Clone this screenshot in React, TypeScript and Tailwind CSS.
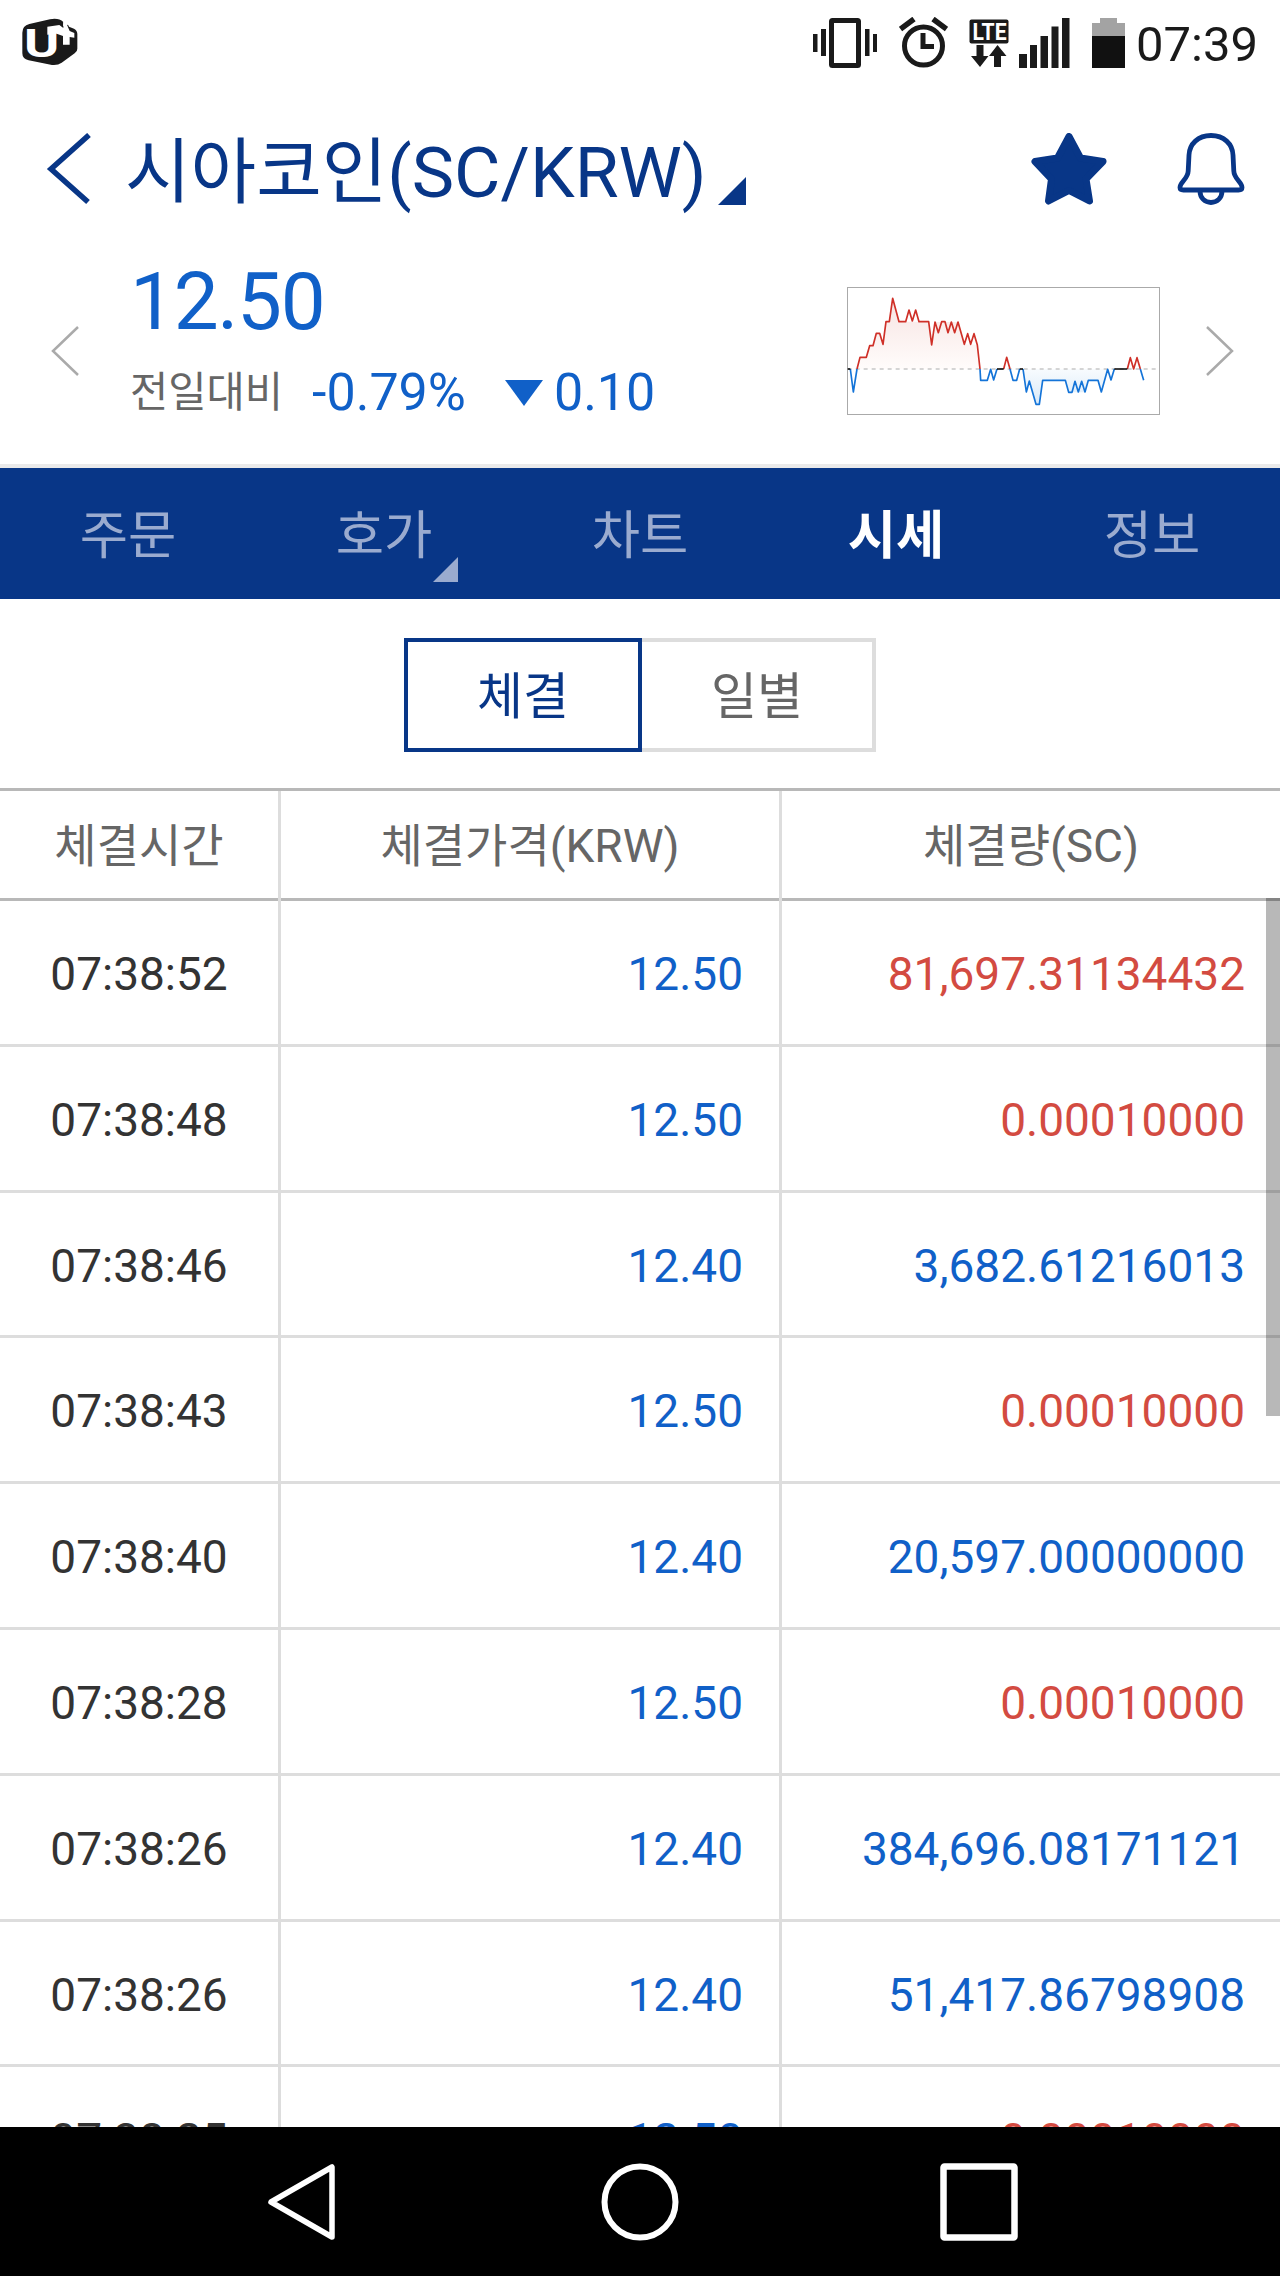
import clsx from "clsx";

type Side = "up" | "down";

interface Trade {
  time: string;
  price: string;
  amount: string;
  side: Side;
}

const trades: Trade[] = [
  { time: "07:38:52", price: "12.50", amount: "81,697.31134432", side: "up" },
  { time: "07:38:48", price: "12.50", amount: "0.00010000", side: "up" },
  { time: "07:38:46", price: "12.40", amount: "3,682.61216013", side: "down" },
  { time: "07:38:43", price: "12.50", amount: "0.00010000", side: "up" },
  { time: "07:38:40", price: "12.40", amount: "20,597.00000000", side: "down" },
  { time: "07:38:28", price: "12.50", amount: "0.00010000", side: "up" },
  { time: "07:38:26", price: "12.40", amount: "384,696.08171121", side: "down" },
  { time: "07:38:26", price: "12.40", amount: "51,417.86798908", side: "down" },
  { time: "07:38:25", price: "12.50", amount: "0.00010000", side: "up" },
];

const tabs = [
  { label: "주문" },
  { label: "호가", hasMenu: true },
  { label: "차트" },
  { label: "시세", active: true },
  { label: "정보" },
];

function CarrierLogo() {
  return (
    <svg viewBox="66 54 168 144" className="h-12 w-14">
      <path
        d="M67 98Q67 77 88 72L150 58Q176 53 190 66L189 78L204 74L207 80L222 86Q232 92 232 102V146Q232 155 224 160L185 188Q173 197 156 195L86 181Q67 177 67 160Z"
        fill="#1a1a1a"
      />
      <text
        x="72"
        y="172"
        textLength="106"
        lengthAdjust="spacingAndGlyphs"
        className="font-['Roboto',sans-serif] text-[116px] font-bold"
        fill="#fff"
      >
        U
      </text>
      <path
        d="M142 80L178 75L190 84V64L199 70L209 93L223 99V113L209 111V134H189V108L170 101L142 104Z"
        fill="#fff"
      />
    </svg>
  );
}

function VibrateIcon() {
  return (
    <svg viewBox="0 0 64 51" className="h-[51px] w-16" fill="#1a1a1a">
      <rect x="0" y="17" width="4.5" height="18" />
      <rect x="8" y="12" width="5" height="27" />
      <rect x="18.500" y="3.500" width="27" height="45" rx="1" fill="none" stroke="#1a1a1a" strokeWidth="5" />
      <rect x="52" y="12" width="4.500" height="27" />
      <rect x="60" y="17" width="4" height="18" />
    </svg>
  );
}

function AlarmIcon() {
  return (
    <svg viewBox="0 0 49 51" className="h-[51px] w-[49px]" fill="none" stroke="#1a1a1a">
      <circle cx="24.500" cy="29" r="19" strokeWidth="5" />
      <path d="M24 16V29.500H35" strokeWidth="5" />
      <path d="M1.500 12L15 2M34 2L47.500 12" strokeWidth="5.500" />
    </svg>
  );
}

function LteIcon() {
  return (
    <svg viewBox="0 0 40 49" className="h-[49px] w-10 overflow-visible" fill="#1a1a1a">
      <rect x="0.500" y="0.500" width="39" height="24" rx="2" />
      <text
        x="3.500"
        y="20.500"
        textLength="34"
        lengthAdjust="spacingAndGlyphs"
        className="font-['Roboto',sans-serif] text-[23px] font-bold"
        fill="#fff"
      >
        LTE
      </text>
      <path d="M7.500 26h7v11h5L11 48L2 37h5.500zM25 48h7V37h5.500L28.500 26L20 37h5z" />
    </svg>
  );
}

function SignalIcon() {
  return (
    <svg viewBox="0 0 51 50" className="h-[50px] w-[51px]" fill="#1a1a1a">
      <rect x="0" y="36" width="8" height="14" />
      <rect x="11" y="27" width="7" height="23" />
      <rect x="21.500" y="18" width="7.500" height="32" />
      <rect x="32.500" y="8.500" width="7" height="41.500" />
      <rect x="43" y="0" width="7.500" height="50" />
    </svg>
  );
}

function BatteryIcon() {
  return (
    <svg viewBox="0 0 33 51" className="h-[51px] w-[33px]">
      <path d="M8 1h17v5h8v13H0V6h8z" fill="#a3a3a3" />
      <rect y="19" width="33" height="32" fill="#111" />
    </svg>
  );
}

function StatusBar() {
  return (
    <div className="flex h-20 items-start justify-between pr-[22px] pl-[22px]">
      <div className="pt-[18px]">
        <CarrierLogo />
      </div>
      <div className="flex items-start pt-[17px]">
        <VibrateIcon />
        <div className="ml-[22px]">
          <AlarmIcon />
        </div>
        <div className="mt-0.5 ml-[21px]">
          <LteIcon />
        </div>
        <div className="mt-px ml-[10px]">
          <SignalIcon />
        </div>
        <div className="ml-[22px]">
          <BatteryIcon />
        </div>
        <span className="ml-[11px] text-[49px] leading-[56px] text-[#1a1a1a]">07:39</span>
      </div>
    </div>
  );
}

function Header() {
  return (
    <header className="flex h-[178px] items-center pr-[35px] pl-[46px]">
      <svg viewBox="0 0 46 72" className="h-[72px] w-[46px]">
        <path d="M43 2L5 36L42 69" fill="none" stroke="#083687" strokeWidth="5.500" />
      </svg>
      <h1 className="ml-[33px] pt-[7px] text-[71.3px] leading-[90px] whitespace-nowrap text-[#083687]">
        시아코인(SC/KRW)
      </h1>
      <svg viewBox="0 0 28 28" className="mt-11 ml-[11px] size-7">
        <path d="M28 0V28H0z" fill="#083687" />
      </svg>
      <div className="ml-auto flex items-center gap-[70px]">
        <svg viewBox="0 0 76 72" className="h-[72px] w-[76px]">
          <path
            d="M38 3.500L49.500 25L72 28.500L55 46L58.500 68L38 57.500L17.500 68L20.500 46L4 28.500L26.500 25Z"
            fill="#083687"
            stroke="#083687"
            strokeWidth="7"
            strokeLinejoin="round"
          />
        </svg>
        <svg viewBox="0 0 68 72" className="h-[72px] w-[68px]" fill="none" stroke="#083687" strokeWidth="4.800">
          <path d="M34 2.500C21 2.500 12.500 11 12 22L11.200 38C11 46 3 49 3 54.500Q3 57 6.500 57H61.500Q65 57 65 54.500C65 49 57 46 56.800 38L56 22C55.500 11 47 2.500 34 2.500Z" />
          <path d="M23 58C23 65 28 69.500 34 69.500S45 65 45 58" />
        </svg>
      </div>
    </header>
  );
}

function MiniChart() {
  return (
    <svg viewBox="51 51 939 384" className="h-32 w-[313px]">
      <defs>
        <linearGradient id="rise" x1="0" y1="0" x2="0" y2="1">
          <stop offset="0" stopColor="#f7e4e2" />
          <stop offset="1" stopColor="#fffcfb" />
        </linearGradient>
        <linearGradient id="fall" x1="0" y1="0" x2="0" y2="1">
          <stop offset="0" stopColor="#f8fbfe" />
          <stop offset="1" stopColor="#d9eaf8" />
        </linearGradient>
      </defs>
      <rect x="52.500" y="52.500" width="936" height="381" fill="#fff" stroke="#aaa" strokeWidth="3" />
      <path
        d="M81 297L90 262H109L119 227H129L139 190H149L159 223L168 155H178L188 85L207 155H296L305 225L315 156H384L403 223L442 225L450 297Z"
        fill="url(#rise)"
      />
      <path d="M579 297L589 366L598 333L618 403H628L638 331H706L716 367H765L775 331H804L814 366L833 297Z" fill="url(#fall)" />
      <path d="M53 297H988" stroke="#c8c8c8" strokeWidth="5" strokeDasharray="12 12" />
      <g fill="none" strokeWidth="5" strokeLinejoin="round">
        <path
          d="M81 297L90 262H109L119 227H129L139 190H149L159 223L168 155H178L188 85L207 155H227L237 120L247 153L257 120L267 155H296L305 225L315 156L325 188L335 155H345L354 188L364 156L374 188L384 156L403 223L413 191L422 223L432 191L442 225L450 297M521 297L530 262L540 297M892 297L901 263L911 297L921 263L931 297"
          stroke="#cf3028"
        />
        <path
          d="M61 297L70 366L81 297M450 297L452 331H472L482 298L491 330L501 297M540 297L549 331H560L569 297M579 297L589 366L598 333L618 403H628L638 331H706L716 367H726L735 334L745 366L755 334L765 366L775 331H804L814 366L833 298L843 330L853 297M931 297L941 331"
          stroke="#1474d8"
        />
        <path d="M53 297H61M501 297H521M569 297H579M853 297H892" stroke="#000" />
      </g>
    </svg>
  );
}

function Quote() {
  return (
    <section className="flex h-[206px] items-start pt-1 pr-[46px] pl-[51px]">
      <svg viewBox="0 0 28 50" className="mt-16 h-[50px] w-7">
        <path d="M27 1L2 25L27 49" fill="none" stroke="#aaa" strokeWidth="2.500" />
      </svg>
      <div className="ml-[51px] text-[#1060c8]">
        <p className="text-[80px] leading-[80px] tracking-[-1.3px]">12.50</p>
        <div className="mt-[21px] flex items-center text-[52px] leading-[60px]">
          <span className="text-[41.600px] text-[#666]">전일대비</span>
          <span className="ml-[29px]">-0.79%</span>
          <svg viewBox="0 0 38 26" className="ml-[39px] h-[26px] w-[38px]">
            <path d="M0 0H38L19 26z" fill="#1060c8" />
          </svg>
          <span className="ml-[11px]">0.10</span>
        </div>
      </div>
      <div className="mt-[25px] ml-auto">
        <MiniChart />
      </div>
      <svg viewBox="0 0 28 50" className="mt-16 ml-[46px] h-[50px] w-7">
        <path d="M1 1L26 25L1 49" fill="none" stroke="#aaa" strokeWidth="2.500" />
      </svg>
    </section>
  );
}

function TabBar() {
  return (
    <nav className="grid h-[135px] grid-cols-5 border-t-4 border-[#eaeaea] bg-[#083687]">
      {tabs.map((tab) => (
        <div
          key={tab.label}
          className={clsx(
            "relative flex items-center justify-center pt-1 text-[52.500px] leading-[60px]",
            tab.active ? "font-bold text-white" : "text-[#9aabcf]"
          )}
        >
          {tab.label}
          {tab.hasMenu && (
            <svg viewBox="0 0 25 25" className="absolute top-[89px] left-[177px] size-[25px]">
              <path d="M25 0V25H0z" fill="#9aabcf" />
            </svg>
          )}
        </div>
      ))}
    </nav>
  );
}

function TradeTable() {
  return (
    <div className="relative flex-1 overflow-hidden">
      <div className="grid h-[113px] grid-cols-[281px_501px_498px] border-y-[3px] border-[#b8b8b8] text-center text-[46px] leading-[110px] text-[#666]">
        <div className="border-r-[3px] border-[#ddd]">체결시간</div>
        <div className="border-r-[3px] border-[#ddd]">체결가격(KRW)</div>
        <div>체결량(SC)</div>
      </div>
      {trades.map((trade, i) => (
        <div
          key={i}
          className="grid h-[145.8px] grid-cols-[281px_501px_498px] border-b-[3px] border-[#ddd] text-[46px] leading-[146px]"
        >
          <div className="border-r-[3px] border-[#ddd] text-center text-[#333]">{trade.time}</div>
          <div className="border-r-[3px] border-[#ddd] pr-9 text-right text-[#1060c8]">{trade.price}</div>
          <div
            className={clsx("pr-[35px] text-right", trade.side === "up" ? "text-[#d34b41]" : "text-[#1060c8]")}
          >
            {trade.amount}
          </div>
        </div>
      ))}
      {/* scroll thumb */}
      <div className="absolute top-[110px] right-0 h-[518px] w-[14px] bg-black/28" />
    </div>
  );
}

function NavigationBar() {
  return (
    <div className="flex h-[149px] items-start bg-black pt-9 pl-[267px]">
      <svg viewBox="0 0 70 78" className="h-[78px] w-[70px]">
        <path d="M65 4V74L4 39Z" fill="none" stroke="#fff" strokeWidth="5.500" strokeLinejoin="round" />
      </svg>
      <svg viewBox="0 0 78 78" className="ml-[264px] size-[78px]">
        <circle cx="39" cy="39" r="35.500" fill="none" stroke="#fff" strokeWidth="6" />
      </svg>
      <svg viewBox="0 0 78 78" className="ml-[261px] size-[78px]">
        <rect x="3.500" y="3.500" width="71" height="71" rx="1" fill="none" stroke="#fff" strokeWidth="6.500" />
      </svg>
    </div>
  );
}

export default function App() {
  return (
    <div className="flex h-[2276px] w-[1280px] flex-col overflow-hidden bg-white font-['Roboto','Noto_Sans_CJK_KR',sans-serif]">
      <StatusBar />
      <Header />
      <Quote />
      <TabBar />
      <div className="flex justify-center pt-[39px] pb-9 text-[50px] leading-[110px]">
        <div className="h-[114px] w-[238px] border-4 border-[#083687] text-center text-[#083687]">체결</div>
        <div className="h-[114px] w-[234px] border-y-4 border-r-4 border-[#ddd] text-center text-[#666]">일별</div>
      </div>
      <TradeTable />
      <NavigationBar />
    </div>
  );
}
